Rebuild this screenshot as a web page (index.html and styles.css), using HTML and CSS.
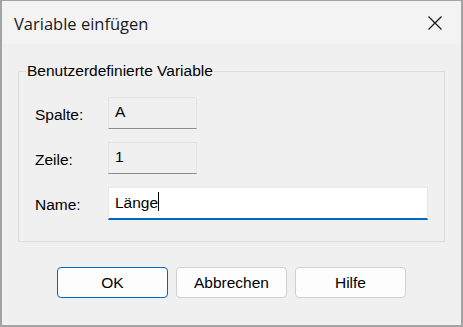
FILE: index.html
```html
<!DOCTYPE html>
<html lang="de">
<head>
<meta charset="utf-8">
<title>Variable einfügen</title>
<link rel="stylesheet" href="styles.css">
</head>
<body>
<div class="window">
  <div class="titlebar">
    <span class="title">Variable einfügen</span>
    <span class="close" aria-label="Schließen">
      <svg width="16" height="16" viewBox="0 0 16 16"><path d="M1.5 1.5 L14.5 14.5 M14.5 1.5 L1.5 14.5" stroke="#1a1a1a" stroke-width="1.3" fill="none"/></svg>
    </span>
  </div>
  <div class="content">
    <fieldset class="group">
      <legend class="legend">Benutzerdefinierte Variable</legend>
      <div class="rows">
        <label class="label">Spalte:</label>
        <div class="field readonly">A</div>
        <label class="label">Zeile:</label>
        <div class="field readonly">1</div>
        <label class="label">Name:</label>
        <div class="field edit">Länge<span class="caret"></span></div>
      </div>
    </fieldset>
    <div class="buttons">
      <button class="btn default">OK</button>
      <button class="btn">Abbrechen</button>
      <button class="btn">Hilfe</button>
    </div>
  </div>
</div>
</body>
</html>
```

FILE: styles.css
```css
html, body {
  margin: 0;
  padding: 0;
}
body {
  width: 463px;
  height: 327px;
  overflow: hidden;
  background: #f0f0f0;
}
.window {
  box-sizing: border-box;
  width: 463px;
  height: 327px;
  border-style: solid;
  border-color: #a3a3a3;
  border-width: 1px 2px 2px 2px;
  background: #f0f0f0;
  display: flex;
  flex-direction: column;
}
.titlebar {
  height: 43px;
  flex: none;
  background: #f3f3f3;
  display: flex;
  align-items: center;
  justify-content: space-between;
  padding: 0 18px 0 12px;
}
.title {
  font-family: "Open Sans", "Liberation Sans", sans-serif;
  font-size: 16.5px;
  color: #1a1a1a;
  margin-top: 2px;
}
.close {
  display: flex;
  width: 16px;
  height: 16px;
  margin-top: 1px;
}
.content {
  flex: 1;
  font-family: "Liberation Sans", Arial, sans-serif;
  font-size: 15.5px;
  color: #000;
}
.group {
  margin: 18px 0 0 16px;
  width: 427px;
  height: 180px;
  box-sizing: border-box;
  border: 1px solid #dcdcdc;
  padding: 0;
}
.legend {
  margin-left: 7px;
  padding: 0 1px;
  line-height: 18px;
}
.rows {
  display: grid;
  grid-template-columns: 73px 89px;
  grid-auto-rows: 32px;
  row-gap: 13px;
  padding: 17px 0 0 16px;
}
.label {
  display: flex;
  align-items: center;
  padding-top: 3px;
}
.field {
  box-sizing: border-box;
  padding: 6px 0 0 6px;
  line-height: 16px;
}
.readonly {
  background: #f0f0f0;
  border: 1px solid #e4e4e4;
  border-bottom-color: #8c8c8c;
}
.edit {
  grid-column: 2;
  width: 320px;
  height: 33px;
  background: #fff;
  border: 1px solid #e8e8e8;
  border-bottom: 2px solid #0067c0;
  padding-top: 7px;
  display: flex;
  align-items: flex-start;
}
.caret {
  display: inline-block;
  width: 1px;
  height: 19px;
  margin-top: -3px;
  background: #000;
}
.buttons {
  display: flex;
  justify-content: center;
  gap: 8px;
  margin-top: 25px;
}
.btn {
  box-sizing: border-box;
  width: 111px;
  height: 31px;
  background: #fdfdfd;
  border: 1px solid #d0d0d0;
  border-radius: 4px;
  font-family: "Liberation Sans", Arial, sans-serif;
  font-size: 15.5px;
  color: #000;
  padding: 0;
}
.btn.default {
  border-color: #0067c0;
}
```
